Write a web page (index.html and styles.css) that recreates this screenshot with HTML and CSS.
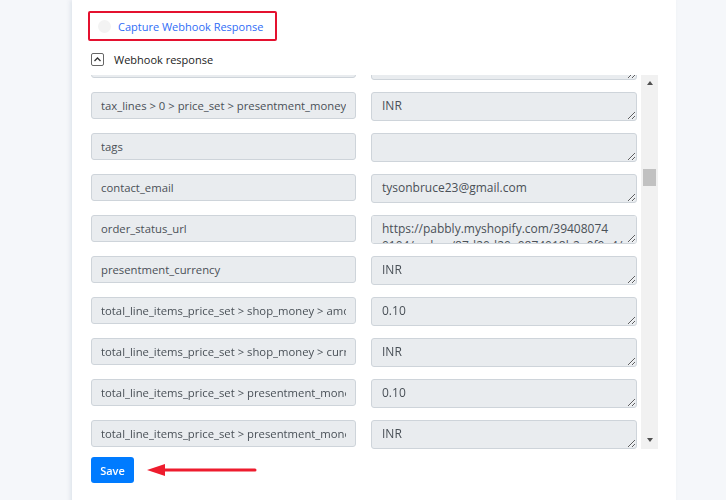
FILE: index.html
```html
<!DOCTYPE html>
<html>
<head>
<meta charset="utf-8">
<link rel="stylesheet" href="styles.css">
</head>
<body>
<div class="page">
  <div class="card">
    <div class="capture">
      <span class="toggle"></span>
      <span class="capture-text">Capture Webhook Response</span>
    </div>
    <div class="wh-head">
      <span class="chev"><svg width="9" height="9" viewBox="0 0 9 9"><path d="M1.5 6 L4.5 3 L7.5 6" fill="none" stroke="#333" stroke-width="1.3"/></svg></span>
      <span class="wh-title">Webhook response</span>
    </div>
    <div class="scroller">
      <div class="viewport">
        <div class="list">
          <div class="row"><input class="key" readonly value="tax_lines > 0 > price_set > shop_money"><textarea class="val" readonly>INR</textarea></div>
          <div class="row"><input class="key" readonly value="tax_lines > 0 > price_set > presentment_money"><textarea class="val" readonly>INR</textarea></div>
          <div class="row"><input class="key" readonly value="tags"><textarea class="val" readonly></textarea></div>
          <div class="row"><input class="key" readonly value="contact_email"><textarea class="val" readonly>tysonbruce23@gmail.com</textarea></div>
          <div class="row"><input class="key" readonly value="order_status_url"><textarea class="val long" readonly>https://pabbly.myshopify.com/39408074 0104/orders/87d20d20e0874018b2e0f9a4/authenticate?key=3bd1a2b5c0e4f</textarea></div>
          <div class="row"><input class="key" readonly value="presentment_currency"><textarea class="val" readonly>INR</textarea></div>
          <div class="row"><input class="key" readonly value="total_line_items_price_set > shop_money > amount"><textarea class="val" readonly>0.10</textarea></div>
          <div class="row"><input class="key" readonly value="total_line_items_price_set > shop_money > currency_code"><textarea class="val" readonly>INR</textarea></div>
          <div class="row"><input class="key" readonly value="total_line_items_price_set > presentment_money > amount"><textarea class="val" readonly>0.10</textarea></div>
          <div class="row"><input class="key" readonly value="total_line_items_price_set > presentment_money > currency_code"><textarea class="val" readonly>INR</textarea></div>
        </div>
      </div>
      <div class="sbar">
        <span class="arrow-up"></span>
        <span class="thumb"></span>
        <span class="arrow-down"></span>
      </div>
    </div>
    <div class="actions">
      <button class="save">Save</button>
      <svg class="red-arrow" width="110" height="14" viewBox="0 0 110 14"><path d="M16 7 H108" stroke="#ee1c2e" stroke-width="3" stroke-linecap="round"/><path d="M0 7 L18 1 L18 13 Z" fill="#ee1c2e"/></svg>
    </div>
  </div>
</div>
</body>
</html>
```
FILE: styles.css
```css
html, body {
  margin: 0;
  padding: 0;
  background: #f5f7fa;
  font-family: "Open Sans", "Liberation Sans", sans-serif;
  overflow: hidden;
}
.page {
  height: 500px;
  padding-left: 72px;
}
.card {
  width: 588px;
  height: 500px;
  background: #fff;
  box-shadow: -2px 0 4px rgba(200, 208, 220, 0.45);
  padding: 11px 0 0 16px;
  display: flex;
  flex-direction: column;
  align-items: flex-start;
}
.capture {
  box-sizing: border-box;
  width: 189px;
  height: 30px;
  border: 2.5px solid #e4112f;
  border-radius: 2px;
  display: flex;
  align-items: center;
  padding-left: 8px;
}
.toggle {
  width: 13px;
  height: 13px;
  border-radius: 50%;
  background: #f3f3f3;
  margin-right: 7px;
}
.capture-text {
  color: #2f6cf6;
  font-size: 11px;
}
.wh-head {
  display: flex;
  align-items: center;
  margin: 10px 0 0 3px;
  height: 17px;
}
.chev {
  box-sizing: border-box;
  width: 13px;
  height: 13px;
  border: 1px solid #666;
  border-radius: 2px;
  display: flex;
  align-items: center;
  justify-content: center;
  margin-right: 10px;
}
.wh-title {
  font-size: 11px;
  color: #222;
}
.scroller {
  display: flex;
  margin: 7px 0 0 3px;
  height: 374px;
}
.viewport {
  width: 546px;
  height: 374px;
  overflow: hidden;
}
.list {
  margin-top: -24px;
  display: flex;
  flex-direction: column;
  gap: 12px;
}
.row {
  display: flex;
  align-items: flex-start;
  gap: 15px;
}
.key {
  box-sizing: border-box;
  width: 265px;
  height: 27px;
  margin: 0;
  padding: 0 9px;
  background: #e9ecef;
  border: 1px solid #ced4da;
  border-radius: 3px;
  font-family: "Open Sans", "Liberation Sans", sans-serif;
  font-size: 11.3px;
  color: #495057;
  outline: none;
}
.val {
  box-sizing: border-box;
  width: 266px;
  height: 29px;
  margin: 0;
  padding: 4px 10px;
  background: #e9ecef;
  border: 1px solid #ced4da;
  border-radius: 3px;
  font-family: "Open Sans", "Liberation Sans", sans-serif;
  font-size: 12px;
  line-height: 17px;
  color: #495057;
  outline: none;
  display: block;
}
.long {
  overflow-y: scroll;
}
.long::-webkit-scrollbar {
  width: 15px;
  background: #e9ecef;
}
.long::-webkit-scrollbar-thumb {
  background: #dcdcdc;
}
.long::-webkit-scrollbar-button:single-button:vertical:decrement {
  height: 12px;
  background: #e9ecef;
}
.sbar {
  width: 17px;
  height: 374px;
  margin-left: 4px;
  background: #f1f1f1;
  display: flex;
  flex-direction: column;
  align-items: center;
}
.arrow-up {
  margin-top: 6px;
  width: 0;
  height: 0;
  border-left: 3.5px solid transparent;
  border-right: 3.5px solid transparent;
  border-bottom: 4px solid #505050;
}
.thumb {
  margin-top: 84px;
  width: 13px;
  height: 17px;
  background: #c1c1c1;
}
.arrow-down {
  margin-top: auto;
  margin-bottom: 7px;
  width: 0;
  height: 0;
  border-left: 3.5px solid transparent;
  border-right: 3.5px solid transparent;
  border-top: 4px solid #505050;
}
.actions {
  display: flex;
  align-items: center;
  margin: 8px 0 0 3px;
}
.save {
  width: 43px;
  height: 26px;
  border: none;
  border-radius: 3px;
  background: #007bff;
  color: #fff;
  font-family: "Open Sans", "Liberation Sans", sans-serif;
  font-size: 11px;
  font-weight: 600;
  padding: 0;
}
.red-arrow {
  margin-left: 13px;
}
```
